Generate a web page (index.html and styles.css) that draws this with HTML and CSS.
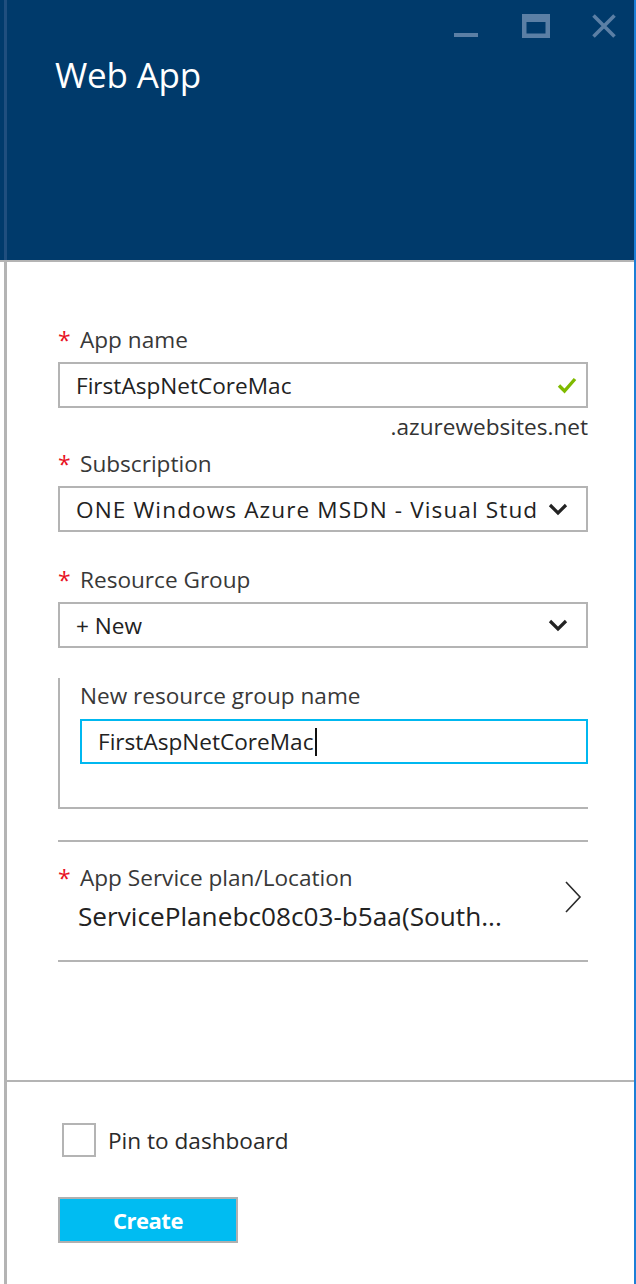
FILE: index.html
```html
<!DOCTYPE html>
<html lang="en">
<head>
<meta charset="utf-8">
<title>Web App</title>
<link rel="stylesheet" href="styles.css">
</head>
<body>
<div class="blade">
  <header class="head">
    <h1 class="title">Web App</h1>
    <div class="controls">
      <svg class="ctl ctl-min" width="24" height="24" viewBox="0 0 24 24"><rect x="0" y="19" width="24" height="4" fill="#5b7fa5"/></svg>
      <svg class="ctl ctl-max" width="28" height="24" viewBox="0 0 28 24"><path d="M0 0H28V24H0Z M4.5 8V19.5H23.5V8Z" fill="#5b7fa5" fill-rule="evenodd"/></svg>
      <svg class="ctl ctl-close" width="24" height="24" viewBox="0 0 24 24"><path d="M1.5 1.5L22.5 22.5M22.5 1.5L1.5 22.5" stroke="#5b7fa5" stroke-width="3.6"/></svg>
    </div>
  </header>
  <main class="body">
    <div class="form">
      <div class="label first"><span class="req">*</span>App name</div>
      <div class="box">
        <span class="box-text">FirstAspNetCoreMac</span>
        <svg class="check" width="20" height="18" viewBox="0 0 20 18"><path d="M2 9.5L7.5 15L18 3" fill="none" stroke="#7fba00" stroke-width="3.4"/></svg>
      </div>
      <div class="suffix">.azurewebsites.net</div>

      <div class="label"><span class="req">*</span>Subscription</div>
      <div class="box select">
        <span class="box-text clip wide">ONE Windows Azure MSDN - Visual Stud</span>
        <svg class="chev" width="20" height="13" viewBox="0 0 20 13"><path d="M2 2L10 10L18 2" fill="none" stroke="#232323" stroke-width="3.2"/></svg>
      </div>

      <div class="label gap-lg"><span class="req">*</span>Resource Group</div>
      <div class="box select">
        <span class="box-text">+ New</span>
        <svg class="chev" width="20" height="13" viewBox="0 0 20 13"><path d="M2 2L10 10L18 2" fill="none" stroke="#232323" stroke-width="3.2"/></svg>
      </div>

      <div class="nested">
        <div class="label plain">New resource group name</div>
        <div class="box focus">
          <span class="box-text">FirstAspNetCoreMac</span><span class="caret"></span>
        </div>
      </div>

      <div class="rule"></div>
      <div class="plan">
        <div class="plan-text">
          <div class="label tight"><span class="req">*</span>App Service plan/Location</div>
          <div class="plan-value">ServicePlanebc08c03-b5aa(South...</div>
        </div>
        <svg class="chev-right" width="18" height="32" viewBox="0 0 18 32"><path d="M2 1L16 16L2 31" fill="none" stroke="#2a2a2a" stroke-width="1.6"/></svg>
      </div>
      <div class="rule"></div>
    </div>

    <footer class="foot">
      <label class="pin"><span class="checkbox"></span><span>Pin to dashboard</span></label>
      <button class="create" type="button">Create</button>
    </footer>
  </main>
</div>
</body>
</html>
```

FILE: styles.css
```css
* { box-sizing: border-box; }
html, body {
  margin: 0;
  padding: 0;
  background: #ffffff;
}
body {
  font-family: "Open Sans", "Noto Sans", "Liberation Sans", sans-serif;
  color: #333333;
}
.blade {
  width: 636px;
  height: 1284px;
  border-right: 2px solid #1c7fd6;
  display: flex;
  flex-direction: column;
}
.head {
  height: 262px;
  flex: none;
  background: linear-gradient(to right, #003a6b 0, #003a6b 4px, #1f4e7e 4px, #1f4e7e 7px, #003a6b 7px);
  border-bottom: 2px solid #b4b4b4;
  display: flex;
  justify-content: space-between;
  align-items: flex-start;
  padding: 0 18px 0 55px;
}
.title {
  margin: 51px 0 0 0;
  font-weight: 400;
  font-size: 35px;
  line-height: 48px;
  color: #ffffff;
  letter-spacing: -0.2px;
}
.controls {
  display: flex;
  align-items: flex-start;
  padding-top: 14px;
}
.ctl { display: block; }
.ctl-max { margin-left: 44px; }
.ctl-close { margin-left: 42px; }

.body {
  flex: 1;
  margin-left: 4px;
  border-left: 3px solid #b4b4b4;
  display: flex;
  flex-direction: column;
}
.form {
  padding: 0 46px 0 51px;
  display: flex;
  flex-direction: column;
  height: 820px;
  border-bottom: 2px solid #b4b4b4;
}
.label {
  font-size: 22.6px;
  line-height: 26px;
  height: 26px;
  color: #383838;
  margin-top: 11px;
  margin-bottom: 9px;
  display: flex;
  white-space: nowrap;
}
.label.first { margin-top: 65px; }
.label.gap-lg { margin-top: 35px; }
.label.tight { margin: 0; }
.label.plain { margin-top: 5px; margin-bottom: 10px; }
.req {
  color: #e81123;
  width: 22px;
  flex: none;
  font-size: 23px;
  line-height: 26px;
}
.box {
  height: 46px;
  border: 2px solid #b4b4b4;
  display: flex;
  align-items: center;
  padding: 0 16px 0 16px;
  font-size: 22.6px;
  color: #222222;
}
.box-text {
  white-space: nowrap;
}
.box-text.clip {
  overflow: hidden;
  flex: 1;
  min-width: 0;
  margin-right: 8px;
}
.box-text.wide { letter-spacing: 1.1px; }
.select { justify-content: space-between; padding-right: 18px; }
.check { margin-left: auto; margin-right: -7px; }
.chev { flex: none; }
.suffix {
  text-align: right;
  font-size: 22.6px;
  line-height: 26px;
  margin-top: 6px;
  color: #333333;
}
.nested {
  margin-top: 30px;
  border-left: 2px solid #b4b4b4;
  border-bottom: 2px solid #b4b4b4;
  padding: 0 0 0 20px;
  height: 131px;
}
.box.focus {
  border-color: #00b8f0;
  height: 45px;
  padding-left: 16px;
}
.caret {
  display: inline-block;
  width: 2px;
  height: 28px;
  background: #111111;
  margin-left: 1px;
}
.rule {
  height: 2px;
  background: #b4b4b4;
  margin-top: 31px;
}
.plan {
  display: flex;
  align-items: center;
  justify-content: space-between;
  padding: 23px 6px 29px 0;
}
.plan + .rule { margin-top: 0; }
.plan-value {
  font-size: 26.2px;
  line-height: 30px;
  color: #222222;
  margin-top: 10px;
  padding-left: 20px;
  white-space: nowrap;
}
.chev-right { margin-top: -2px; }

.foot {
  padding: 41px 0 0 51px;
  display: flex;
  flex-direction: column;
  align-items: flex-start;
}
.pin {
  display: flex;
  align-items: center;
  font-size: 22.6px;
  color: #2a2a2a;
  margin-left: 4px;
}
.checkbox {
  width: 34px;
  height: 34px;
  border: 2px solid #b4b4b4;
  margin-right: 12px;
  display: inline-block;
}
.create {
  margin-top: 40px;
  width: 180px;
  height: 46px;
  background: #00bcf2;
  border: 2px solid #b0b0b0;
  color: #ffffff;
  font-family: "Open Sans", "Noto Sans", sans-serif;
  font-weight: 700;
  font-size: 22px;
  letter-spacing: -0.5px;
  padding: 0;
}
```
